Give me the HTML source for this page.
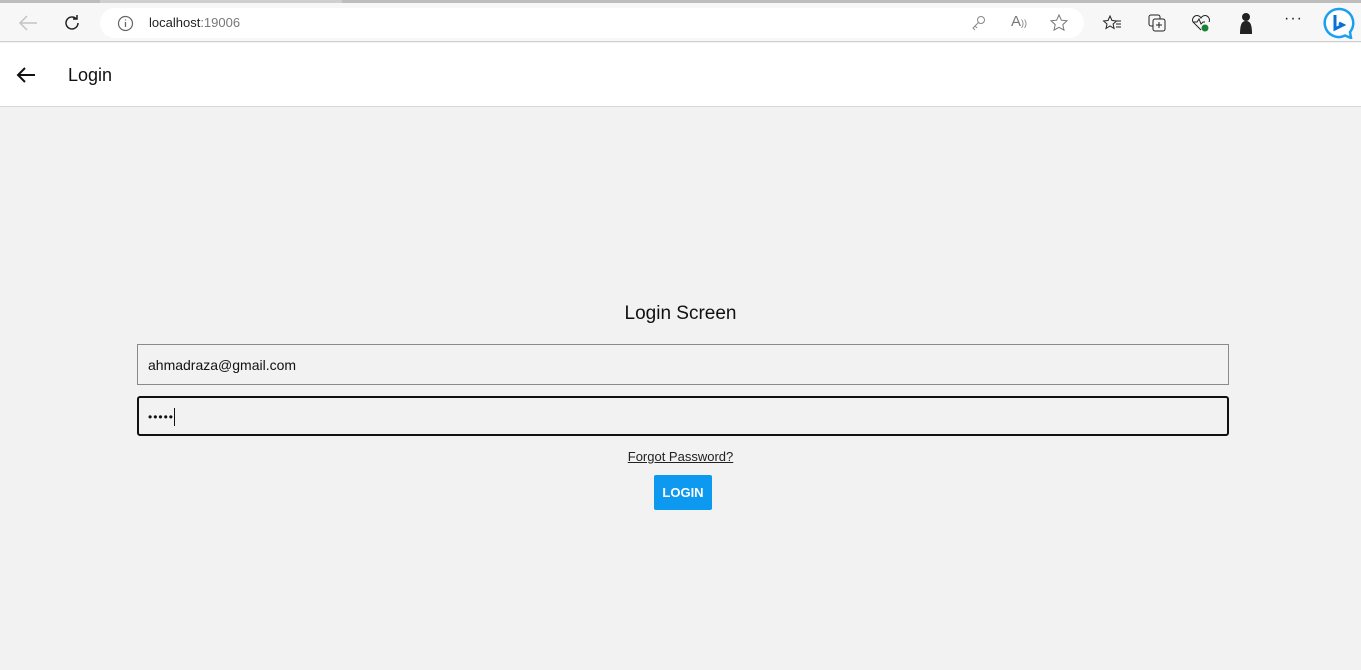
<!DOCTYPE html>
<html><head><meta charset="utf-8"><style>
*{box-sizing:border-box;margin:0;padding:0}
body{width:1361px;height:670px;overflow:hidden;background:#f2f2f2;font-family:"Liberation Sans",sans-serif;position:relative}
.abs{position:absolute}
svg{position:absolute}
</style></head><body>
<div class="abs" style="left:0;top:0;width:1361px;height:3px;background:#cfcfcf"></div>
<div class="abs" style="left:0;top:0;width:100px;height:3px;background:#bdbdbd"></div>
<div class="abs" style="left:342px;top:0;width:1019px;height:3px;background:#bdbdbd"></div>
<div class="abs" style="left:0;top:3px;width:1361px;height:39px;background:#f7f7f7;border-bottom:1px solid #d0d0d0"></div>
<div class="abs" style="left:100px;top:8px;width:984px;height:30px;background:#fff;border-radius:15px"></div>
<svg style="left:17px;top:13px" width="22" height="20" viewBox="0 0 22 20"><path d="M20 10H3M10 3L3 10l7 7" stroke="#c4c4c4" stroke-width="1.5" fill="none"/></svg>
<svg style="left:62px;top:13px" width="20" height="20" viewBox="0 0 20 20"><path d="M16 10a6 6 0 1 1-2-4.5M15 2v4h-4" stroke="#222" stroke-width="1.5" fill="none"/></svg>
<svg style="left:117px;top:15px" width="17" height="17" viewBox="0 0 17 17"><circle cx="8.5" cy="8.5" r="7" stroke="#666" stroke-width="1.2" fill="none"/><path d="M8.5 7v5M8.5 4.5v1" stroke="#666" stroke-width="1.3"/></svg>
<div class="abs" style="left:149px;top:15px;font-size:13px;color:#222">localhost<span style="color:#777">:19006</span></div>
<svg style="left:970px;top:14px" width="18" height="18" viewBox="0 0 18 18"><circle cx="11" cy="6" r="3.5" stroke="#888" fill="none"/><path d="M8.5 8.5L3 14l2 2M5 12l2 2" stroke="#888" fill="none"/></svg>
<div class="abs" style="left:1011px;top:13px;font-size:15px;color:#777">A<span style="font-size:9px">))</span></div>
<svg style="left:1049px;top:13px" width="20" height="20" viewBox="0 0 20 20"><path d="M10 2l2.4 5.2 5.6.6-4.2 3.8 1.2 5.5L10 14.3 5 17.1l1.2-5.5L2 7.8l5.6-.6z" stroke="#777" fill="none"/></svg>
<svg style="left:1102px;top:13px" width="20" height="20" viewBox="0 0 20 20"><path d="M8 3l2 4.5 4.5.5-3.4 3 1 4.5L8 13l-4 2.5 1-4.5-3.4-3L6 7.5z" stroke="#222" fill="none"/><path d="M14 8h5M14 11h5M14 14h5" stroke="#222"/></svg>
<svg style="left:1147px;top:13px" width="20" height="20" viewBox="0 0 20 20"><rect x="2" y="2" width="11" height="11" rx="2" stroke="#222" fill="none"/><rect x="6" y="6" width="12" height="12" rx="2" stroke="#222" fill="#f7f7f7"/><path d="M12 9v6M9 12h6" stroke="#222"/></svg>
<svg style="left:1190px;top:12px" width="22" height="22" viewBox="0 0 22 22"><path d="M11 18L3 10a4 4 0 0 1 8-4 4 4 0 0 1 8 4" stroke="#222" fill="none"/><path d="M3 10h4l2-3 2 5 2-2h2" stroke="#222" fill="none"/><circle cx="15" cy="16" r="3.5" fill="#1a7f37"/></svg>
<svg style="left:1236px;top:10px" width="20" height="26" viewBox="0 0 20 26"><circle cx="10" cy="7" r="4" fill="#222"/><path d="M4 24c0-10 2-13 6-13s6 3 6 13z" fill="#222"/></svg>
<div class="abs" style="left:1284px;top:10px;font-size:16px;color:#222;letter-spacing:1px">···</div>
<svg style="left:1323px;top:7px" width="32" height="32" viewBox="0 0 32 32"><path d="M16 2a14 14 0 1 0 6 26.5L28 31l-1-6A14 14 0 0 0 16 2z" fill="#fff" stroke="#1aa0f0" stroke-width="2.5"/><path d="M12 8v14l8-4-4-2" stroke="#0a6fd6" stroke-width="3" fill="none"/></svg>
<div class="abs" style="left:0;top:43px;width:1361px;height:64px;background:#fff;border-bottom:1px solid #d8d8d8"></div>
<svg style="left:16px;top:66px" width="20" height="18" viewBox="0 0 20 18"><path d="M19 9H2M9 2L2 9l7 7" stroke="#111" stroke-width="2" fill="none"/></svg>
<div class="abs" style="left:68px;top:65px;font-size:18px;color:#111;font-weight:500">Login</div>
<div class="abs" style="left:0;top:303px;width:1361px;text-align:center;font-size:19px;color:#111">Login Screen</div>
<div class="abs" style="left:137px;top:344px;width:1092px;height:41px;border:1px solid #8a8a8a;background:#f2f2f2;font-size:14px;color:#111;padding:12px 0 0 10px">ahmadraza@gmail.com</div>
<div class="abs" style="left:137px;top:396px;width:1092px;height:40px;border:2px solid #111;border-radius:3px;background:#f2f2f2;font-size:12px;color:#111;padding:10px 0 0 9px;letter-spacing:1px">•••••<span style="display:inline-block;width:1px;height:18px;background:#111;vertical-align:-5px;margin-left:0"></span></div>
<div class="abs" style="left:0;top:449px;width:1361px;text-align:center;font-size:13px;color:#222;text-decoration:underline">Forgot Password?</div>
<div class="abs" style="left:654px;top:475px;width:58px;height:35px;background:#0d99f0;border-radius:2px;color:#fff;font-weight:bold;font-size:13px;text-align:center;line-height:35px">LOGIN</div>
</body></html>
